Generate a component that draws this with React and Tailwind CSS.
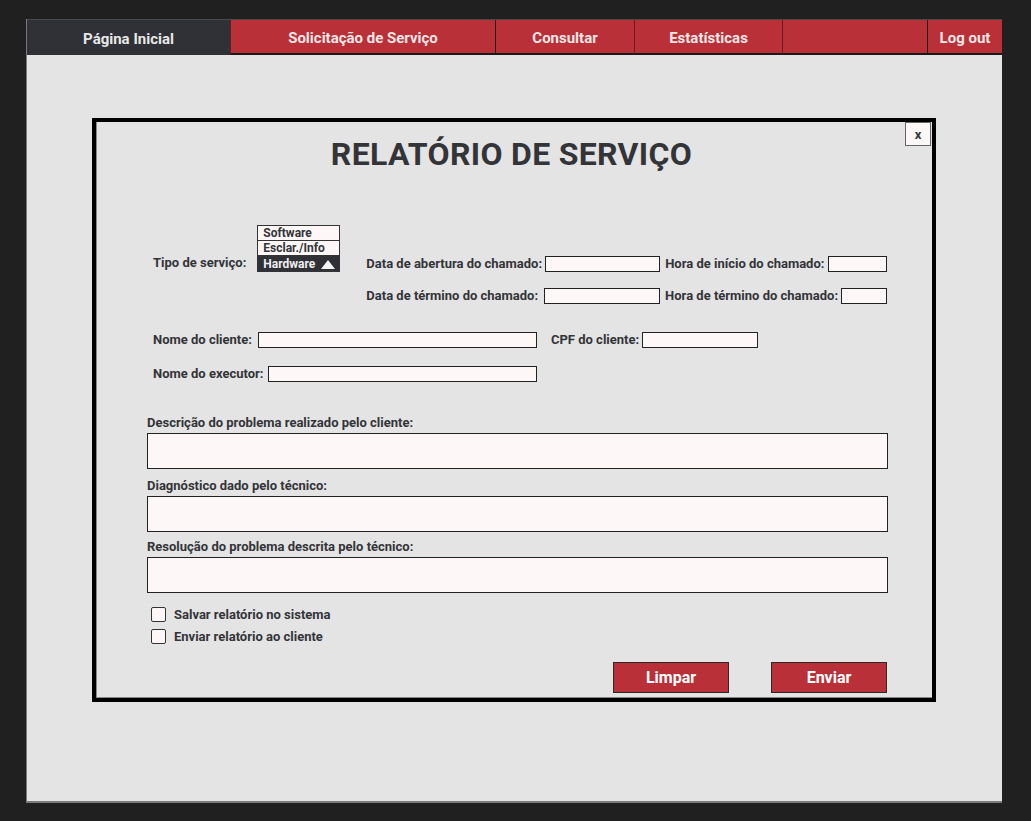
import { useState } from "react";

const font = { fontFamily: "Roboto, 'Liberation Sans', sans-serif" };

const Input = ({ w }) => (
  <input
    type="text"
    className={`h-[16px] border border-[#222] bg-[#fdf7f7] outline-none ${w}`}
  />
);

const Label = ({ children, className = "" }) => (
  <span className={`text-[13px] font-bold text-[#333438] leading-[16px] whitespace-nowrap ${className}`}>
    {children}
  </span>
);

const App = () => {
  const [tipo, setTipo] = useState("Hardware");
  const tabs = [
    { label: "Solicitação de Serviço", w: "w-[265px]", line: "border-[#6d1a20]" },
    { label: "Consultar", w: "w-[139px]", line: "border-[#1a1a1a]" },
    { label: "Estatísticas", w: "w-[148px]", line: "border-[#6d1a20]" },
    { label: "", w: "w-[145px]", line: "border-[#6d1a20]" },
  ];

  const areas = [
    { label: "Descrição do problema realizado pelo cliente:", mt: "" },
    { label: "Diagnóstico dado pelo técnico:", mt: "mt-[9px]" },
    { label: "Resolução do problema descrita pelo técnico:", mt: "mt-[7px]" },
  ];

  return (
    <div className="min-h-screen bg-[#202020] pt-[19px] pl-[26px]" style={font}>
      <div className="w-[976px] h-[784px] bg-[#e4e4e4] border-l border-b-2 border-[#7a7a7a] flex flex-col">
        {/* Navbar */}
        <nav className="flex h-[36px] border-t border-[#4a4a4a]">
          <div className="w-[203px] bg-[#303136] flex items-center justify-center pt-[4px] text-[15px] font-bold text-[#e8e8e8]">
            Página Inicial
          </div>
          {tabs.map((t, i) => (
            <div
              key={i}
              className={`${t.w} bg-[#b93038] border-l ${t.line} border-b-2 border-b-[#1a1a1a] flex items-center justify-center pt-[3px] text-[15px] font-bold text-[#f0e6e6]`}
            >
              {t.label}
            </div>
          ))}
          <div className="flex-1 bg-[#b93038] border-l border-[#1a1a1a] border-b-2 border-b-[#1a1a1a] flex items-center justify-center pt-[3px] text-[15px] font-bold text-[#f0e6e6]">
            Log out
          </div>
        </nav>

        {/* Content */}
        <div className="pt-[63px] pl-[65px]">
          <div className="relative w-[844px] h-[584px] border-4 border-black bg-[#e4e4e4] flex flex-col">
            <div className="flex-1 border-l border-b border-[#888] flex flex-col">
              <button className="absolute top-[0px] right-[1px] w-[26px] h-[24px] bg-[#fdf7f7] border border-[#666] text-[13px] font-bold text-[#333438] leading-none">
                x
              </button>

              <h1 className="text-center text-[32px] font-bold text-[#333438] tracking-[0.01em] mt-[12px] pr-[6px] leading-[40px]">
                RELATÓRIO DE SERVIÇO
              </h1>

              <div className="pl-[56px] mt-[51px]">
                {/* Tipo + datas */}
                <div className="flex items-start">
                  <div className="flex items-end">
                    <Label className="mr-[11px] pb-[1px]">Tipo de serviço:</Label>
                    <div className="w-[83px] flex flex-col text-[12px] font-bold leading-[14px]">
                      <div
                        onClick={() => setTipo("Software")}
                        className="h-[16px] border border-[#333] bg-[#fdf7f7] pl-[5px] text-[#333438] cursor-pointer"
                      >
                        Software
                      </div>
                      <div
                        onClick={() => setTipo("Esclar./Info")}
                        className="h-[16px] -mt-px border border-[#333] bg-[#fdf7f7] pl-[5px] text-[#333438] cursor-pointer"
                      >
                        Esclar./Info
                      </div>
                      <div className="h-[16px] border border-[#333] bg-[#303136] pl-[5px] text-[#f0f0f0] flex items-center gap-[6px]">
                        {tipo === tipo && "Hardware"}
                        <svg width="14" height="9" viewBox="0 0 14 9">
                          <polygon points="7,0 14,9 0,9" fill="#f5f5f5" />
                        </svg>
                      </div>
                    </div>
                  </div>

                  <div className="flex flex-col gap-[16px] ml-[26px] mt-[31px]">
                    <div className="flex items-center">
                      <Label className="mr-[3px]">Data de abertura do chamado:</Label>
                      <Input w="w-[115px]" />
                      <Label className="ml-[5px] mr-[4px]">Hora de início do chamado:</Label>
                      <Input w="w-[59px]" />
                    </div>
                    <div className="flex items-center">
                      <Label className="mr-[6px]">Data de término do chamado:</Label>
                      <Input w="w-[116px]" />
                      <Label className="ml-[5px] mr-[3px]">Hora de término do chamado:</Label>
                      <Input w="w-[46px]" />
                    </div>
                  </div>
                </div>

                {/* Cliente */}
                <div className="flex items-center mt-[28px]">
                  <Label className="mr-[6px]">Nome do cliente:</Label>
                  <Input w="w-[279px]" />
                  <Label className="ml-[14px] mr-[3px]">CPF do cliente:</Label>
                  <Input w="w-[116px]" />
                </div>
                <div className="flex items-center mt-[18px]">
                  <Label className="mr-[5px]">Nome do executor:</Label>
                  <Input w="w-[269px]" />
                </div>
              </div>

              {/* Textareas */}
              <div className="pl-[50px] w-[791px] mt-[33px] flex flex-col">
                {areas.map((a, i) => (
                  <div key={i} className={`flex flex-col ${a.mt}`}>
                    <Label className="mb-[2px]">{a.label}</Label>
                    <textarea className="h-[36px] w-full border border-[#222] bg-[#fdf7f7] resize-none outline-none" />
                  </div>
                ))}
              </div>

              {/* Checkboxes */}
              <div className="pl-[54px] mt-[14px] flex flex-col gap-[7px]">
                {["Salvar relatório no sistema", "Enviar relatório ao cliente"].map((l) => (
                  <label key={l} className="flex items-center gap-[8px] h-[15px]">
                    <span className="w-[15px] h-[15px] border border-[#333] bg-[#fdf7f7] rounded-[2px]" />
                    <Label>{l}</Label>
                  </label>
                ))}
              </div>

              {/* Buttons */}
              <div className="flex justify-end gap-[42px] pr-[45px] mt-[18px]">
                {["Limpar", "Enviar"].map((b) => (
                  <button
                    key={b}
                    className="w-[116px] h-[31px] bg-[#b93038] border border-[#2a2a2a] text-white text-[16px] font-bold"
                  >
                    {b}
                  </button>
                ))}
              </div>
            </div>
          </div>
        </div>
      </div>
    </div>
  );
};

export default App;
